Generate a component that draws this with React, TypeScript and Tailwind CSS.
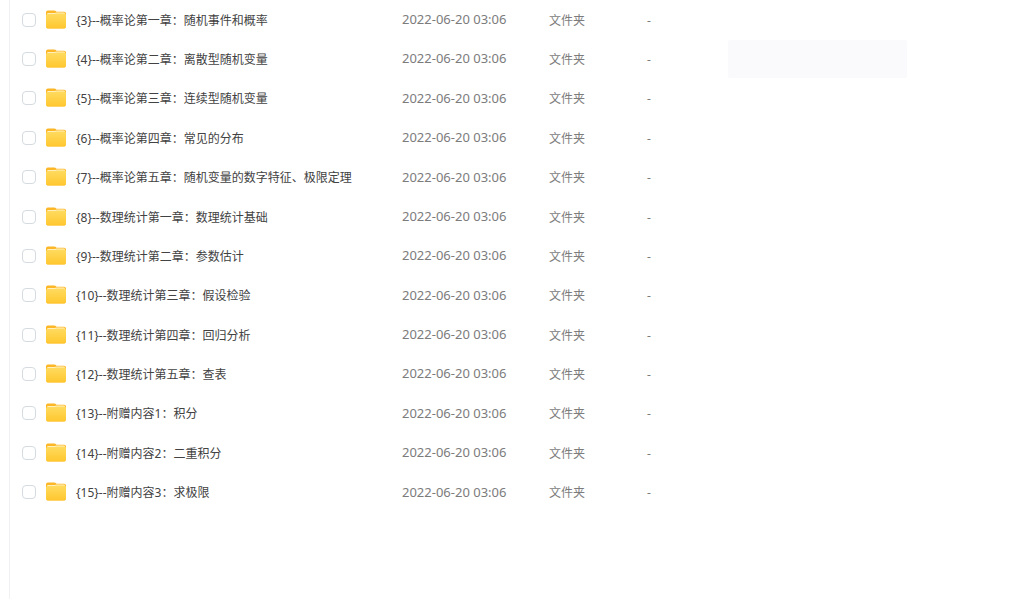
import { useState } from "react";

interface Folder {
  id: number;
  name: string;
  modified: string;
}

const MODIFIED = "2022-06-20 03:06";

const folders: Folder[] = [
  { id: 3, name: "{3}--概率论第一章：随机事件和概率", modified: MODIFIED },
  { id: 4, name: "{4}--概率论第二章：离散型随机变量", modified: MODIFIED },
  { id: 5, name: "{5}--概率论第三章：连续型随机变量", modified: MODIFIED },
  { id: 6, name: "{6}--概率论第四章：常见的分布", modified: MODIFIED },
  { id: 7, name: "{7}--概率论第五章：随机变量的数字特征、极限定理", modified: MODIFIED },
  { id: 8, name: "{8}--数理统计第一章：数理统计基础", modified: MODIFIED },
  { id: 9, name: "{9}--数理统计第二章：参数估计", modified: MODIFIED },
  { id: 10, name: "{10}--数理统计第三章：假设检验", modified: MODIFIED },
  { id: 11, name: "{11}--数理统计第四章：回归分析", modified: MODIFIED },
  { id: 12, name: "{12}--数理统计第五章：查表", modified: MODIFIED },
  { id: 13, name: "{13}--附赠内容1：积分", modified: MODIFIED },
  { id: 14, name: "{14}--附赠内容2：二重积分", modified: MODIFIED },
  { id: 15, name: "{15}--附赠内容3：求极限", modified: MODIFIED },
];

function FolderIcon() {
  return (
    <svg width="20" height="20" viewBox="0 0 20 20" className="shrink-0" aria-hidden="true">
      <defs>
        <linearGradient id="folder-front" x1="0" y1="0" x2="0" y2="1">
          <stop offset="0" stopColor="#ffdb60" />
          <stop offset="1" stopColor="#ffc72e" />
        </linearGradient>
      </defs>
      <path d="M0 2.4Q0 .6 1.8 .6H8.4Q9.2 .6 9.8 1.1L10.6 1.7H18.2Q20 1.7 20 3.5V10H0Z" fill="#fcb626" />
      <path d="M1 5V4.2Q1 3 2.2 3H8.8L10.4 2.6H17.8Q19 2.6 19 3.8V5Z" fill="#fff0bd" />
      <path d="M0 5.6Q0 3.9 1.7 3.9H9L10.4 3.4H18.3Q20 3.4 20 5.1V16.6Q20 18.6 18 18.6H2Q0 18.6 0 16.6Z" fill="url(#folder-front)" />
      <path d="M.2 17.2Q.6 18.3 2 18.3H18Q19.4 18.3 19.8 17.2" fill="none" stroke="#fbbc2c" strokeWidth=".5" />
    </svg>
  );
}

export default function App() {
  const [selected, setSelected] = useState<number[]>([]);

  const toggle = (id: number) => {
    setSelected((prev) => (prev.includes(id) ? prev.filter((x) => x !== id) : [...prev, id]));
  };

  return (
    <div className="min-h-screen bg-white pl-[9px] flex font-['Noto_Sans','Noto_Sans_CJK_SC',sans-serif]">
      <main className="flex-1 border-l border-[#f1f1f3]">
        <table className="w-full h-[512px] table-fixed text-left text-xs">
          <colgroup>
            <col className="w-[392px]" />
            <col className="w-[147px]" />
            <col className="w-[98px]" />
            <col />
          </colgroup>
          <tbody>
            {folders.map((folder) => (
              <tr key={folder.id}>
                <td className="pl-3">
                  <div className="flex items-center gap-[10px]">
                    <input
                      id={`folder-${folder.id}`}
                      type="checkbox"
                      checked={selected.includes(folder.id)}
                      onChange={() => toggle(folder.id)}
                      className="size-[14px] shrink-0 appearance-none rounded-[4px] border border-[#d5dbe0] bg-white checked:bg-blue-500"
                    />
                    <FolderIcon />
                    <label htmlFor={`folder-${folder.id}`} className="pt-[2px] whitespace-nowrap text-[#424242]">
                      {folder.name}
                    </label>
                  </div>
                </td>
                <td className="whitespace-nowrap text-[13px] text-[#7c7c7c]">{folder.modified}</td>
                <td className="pt-[2px] text-[#7c7c7c]">文件夹</td>
                <td className="pt-[2px] text-[#7c7c7c]">-</td>
              </tr>
            ))}
          </tbody>
        </table>
      </main>

      <aside className="w-[296px] shrink-0 pt-10">
        <div className="h-[38px] w-[179px] rounded-[2px] bg-[#fafafc]" />
      </aside>
    </div>
  );
}
